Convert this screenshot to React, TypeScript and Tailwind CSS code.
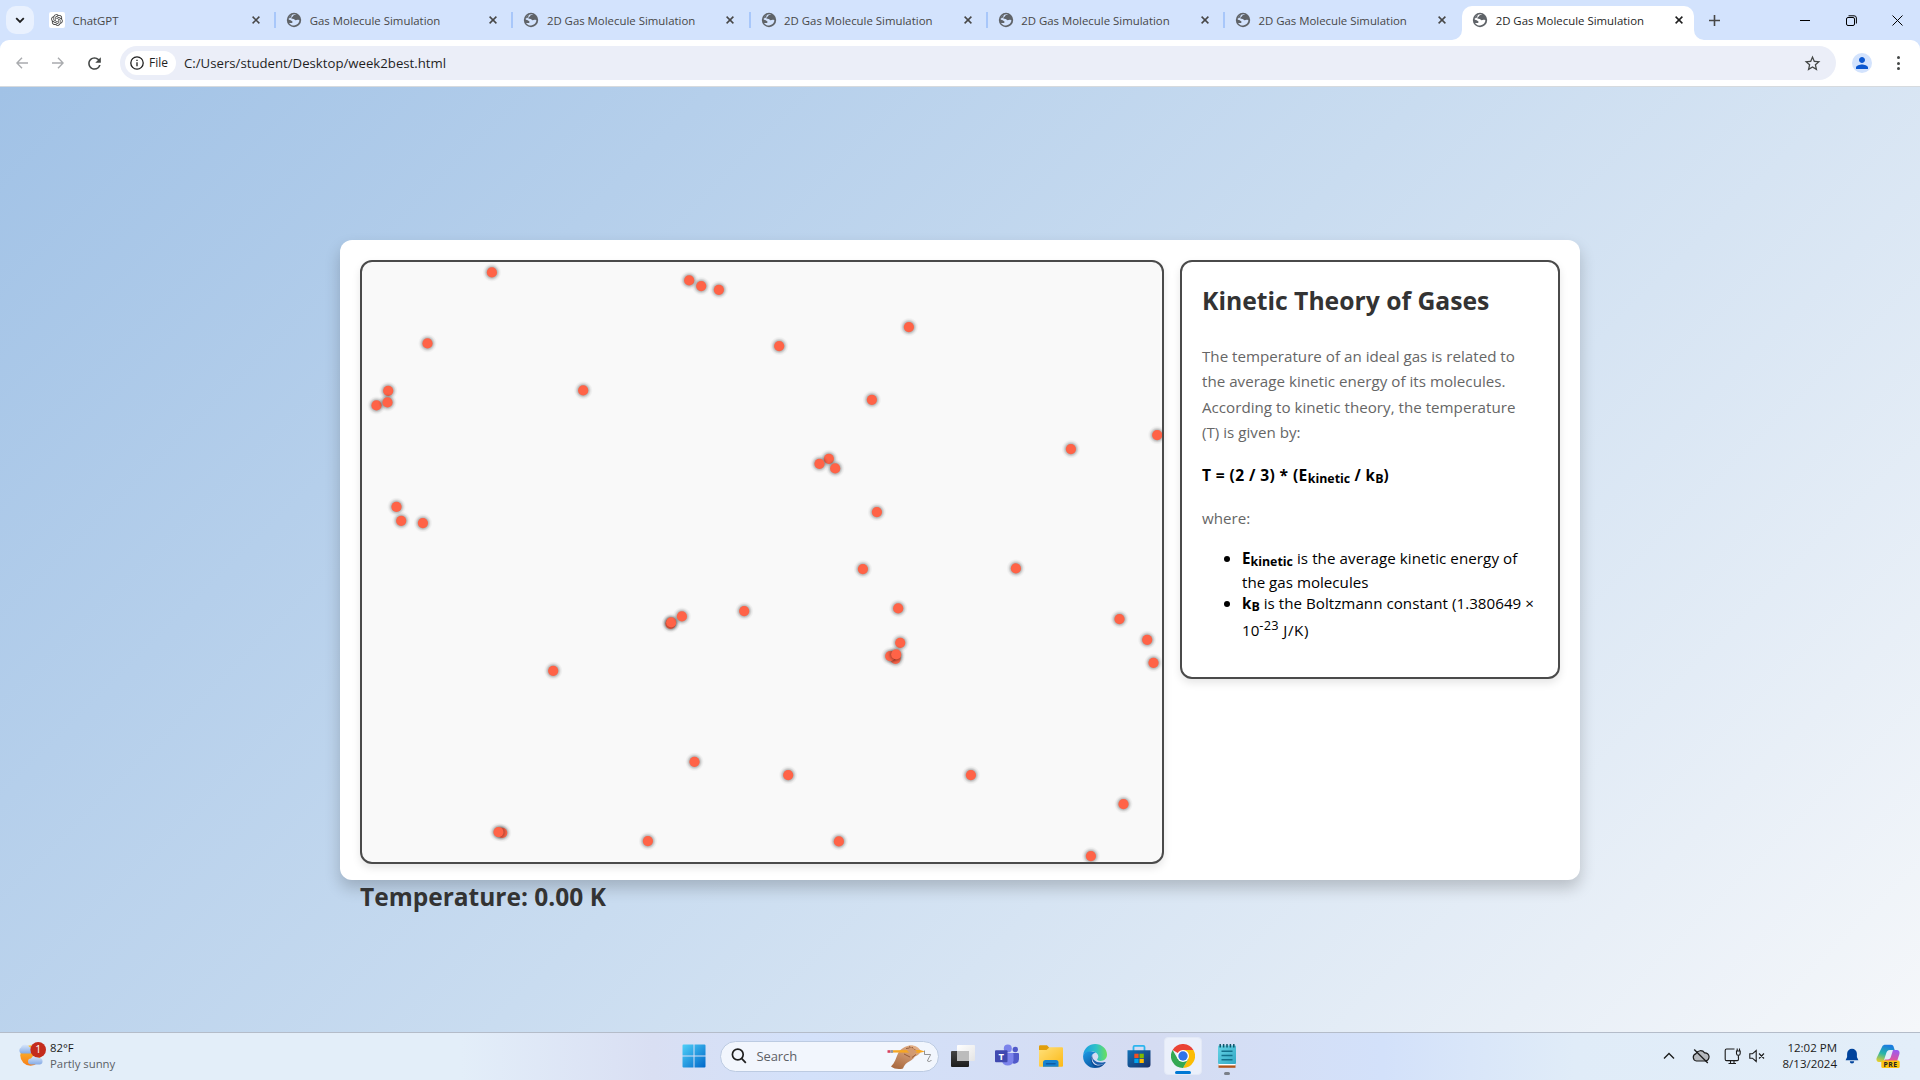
import type { ReactNode } from "react";
import { MdRefresh, MdStarBorder, MdPerson } from "react-icons/md";
import { RiOpenaiFill } from "react-icons/ri";

const tabs = [
  "ChatGPT",
  "Gas Molecule Simulation",
  "2D Gas Molecule Simulation",
  "2D Gas Molecule Simulation",
  "2D Gas Molecule Simulation",
  "2D Gas Molecule Simulation",
  "2D Gas Molecule Simulation",
];

/* Molecule centres inside the 800x600 chamber, in paint order. */
const molecules: [number, number][] = [
  [129.7, 10.3], [327, 18.3], [339, 24], [356.7, 27.7], [65.3, 81.3], [26, 128.7],
  [14.3, 143.3], [25.3, 140.3], [221, 128.3], [34.3, 244.7], [39, 258.7], [60.7, 261],
  [417, 84], [546.7, 65], [509.7, 137.7], [708.7, 187], [795, 173], [466.7, 196.7],
  [457.3, 201.7], [473, 206.3], [514.7, 250], [382, 349], [308.3, 361.7], [309, 360.3],
  [319.7, 354.3], [191, 408.7], [332.3, 499.7], [140, 570.7], [136.3, 570], [285.7, 579],
  [500.7, 307], [653.7, 306.3], [536, 346.3], [538, 380.7], [533.3, 396.7], [528, 394],
  [534, 392.3], [757.3, 357], [785, 377.7], [791.3, 400.7], [426, 513], [608.7, 513],
  [761.3, 542], [476.7, 579.3], [728.7, 594],
];

function CloseIcon({ active = false }: { active?: boolean }) {
  return (
    <svg width="8" height="8" viewBox="0 0 8 8" fill="none" stroke={active ? "#1f1f1f" : "#474747"} strokeWidth="1.5">
      <path d="M0.6 0.6 7.4 7.4M7.4 0.6 0.6 7.4" />
    </svg>
  );
}

function GlobeIcon({ land }: { land: string }) {
  return (
    <svg width="16" height="16" viewBox="0 0 16 16" className="shrink-0">
      <circle cx="8" cy="8" r="7.2" fill="#5f6368" />
      <path
        d="M10.2 2.3C8.9 3.1 7.3 2.9 6.9 4.3 6.7 5.2 5.4 5 5.3 6 5.3 7 6.6 6.8 7.6 6.9 8.8 7 8.6 8.2 9.6 8.2 10.8 8.2 11.4 7.4 13.4 8.3 13.3 9.6 12.8 10.8 11.8 11.8 10.6 12.8 8.6 13.6 6.9 13.6 5.2 13.2 3.8 12.3 2.9 10.8 4.2 11.2 6 11.4 6.5 10.3 7 9.3 5.6 8.9 4.6 8.5 3.8 8.2 3.2 7.6 2.6 7.4 2.8 5.6 3.8 4.1 5.2 3.2 6.8 2.2 8.6 1.9 10.2 2.3Z"
        fill={land}
      />
      <path d="M2.6 7.4C3.6 7.8 4.2 8.4 5.2 8.8L4.2 10.8 2.9 10.8C2.5 9.8 2.4 8.5 2.6 7.4Z" fill="#5f6368" />
      <path d="M2.8 6.6C3.2 4.9 4.4 3.5 6 2.8L5 5.4Z" fill="#5f6368" />
    </svg>
  );
}

function Tab({ title, index }: { title: string; index: number }) {
  const active = index === tabs.length - 1;
  return (
    <div
      className={
        active
          ? "relative mt-[6px] flex h-[34px] w-[232px] items-center rounded-t-[10px] bg-white pl-[10px]"
          : "relative mt-[6px] flex h-[28px] w-[237.2px] items-center pl-[10px]"
      }
    >
      {active && (
        <>
          <svg className="absolute -left-[10px] bottom-0" width="10" height="10"><path d="M10 0V10H0A10 10 0 0 0 10 0Z" fill="#fff" /></svg>
          <svg className="absolute -right-[10px] bottom-0" width="10" height="10"><path d="M0 0V10H10A10 10 0 0 1 0 0Z" fill="#fff" /></svg>
        </>
      )}
      <div className={active ? "-mt-[6px] flex flex-1 items-center" : "flex flex-1 items-center"}>
        {index === 0 ? (
          <span className="grid size-4 place-items-center rounded-[2px] bg-white">
            <RiOpenaiFill size={14} color="#333" />
          </span>
        ) : (
          <GlobeIcon land={active ? "#fff" : "#d3e3fd"} />
        )}
        <span className={active ? "relative top-[0.6px] ml-[7.5px] w-[179.5px] text-[11.4px] text-[#1f1f1f]" : "relative top-[0.6px] ml-[7.5px] w-[179.5px] text-[11.4px] text-[#474747]"}>{title}</span>
        <CloseIcon active={active} />
      </div>
      {index < tabs.length - 2 && <i className="h-4 w-[2px] bg-[#a8c7fa]" />}
    </div>
  );
}

function TabStrip() {
  return (
    <div className="flex h-10 bg-[#d3e3fd]">
      <div className="ml-[6px] mt-[6px] grid h-7 w-7 place-items-center rounded-[10px] bg-[#e9f1fe]">
        <svg width="10" height="7" viewBox="0 0 10 7" fill="none" stroke="#1f1f1f" strokeWidth="1.8"><path d="M1.2 1.2 5 5 8.8 1.2" /></svg>
      </div>
      <div className="ml-[5px] flex">
        {tabs.map((t, i) => <Tab key={i} title={t} index={i} />)}
      </div>
      <div className="ml-[15px] flex h-10 items-center">
        <svg width="11" height="11" viewBox="0 0 11 11" stroke="#474747" strokeWidth="1.6"><path d="M5.5 0V11M0 5.5H11" /></svg>
      </div>
      <div className="ml-auto mr-[17px] flex h-10 items-center gap-[35.5px]">
        <svg width="10" height="10" stroke="#000" fill="none"><path d="M0 5.5H10" /></svg>
        <svg width="11" height="11" stroke="#000" fill="none"><rect x="0.5" y="2.5" width="8" height="8" rx="1.5" /><path d="M2.5 0.8H8A2.3 2.3 0 0 1 10.4 3V8.5" /></svg>
        <svg width="11" height="11" stroke="#000" fill="none"><path d="M0.5 0.5 10.5 10.5M10.5 0.5 0.5 10.5" /></svg>
      </div>
    </div>
  );
}

function Toolbar() {
  return (
    <div className="bg-[#d3e3fd]">
      <div className="flex h-[47px] items-start rounded-t-[9px] border-b border-[#d6dade] bg-white pt-[6px]">
        <div className="ml-[16px] flex h-[34px] w-[104px] items-center">
          <svg width="12" height="12" viewBox="0 0 12 12" fill="none" stroke="#a9abae" strokeWidth="1.4"><path d="M12 6H1M6 0.8 0.9 6 6 11.2" /></svg>
          <svg className="ml-[24px]" width="12" height="12" viewBox="0 0 12 12" fill="none" stroke="#a9abae" strokeWidth="1.4"><path d="M0 6H11M6 0.8 11.1 6 6 11.2" /></svg>
          <MdRefresh size={19} color="#444746" className="ml-[20.5px]" />
        </div>
        <div className="flex h-[34px] w-[1716px] items-center rounded-full bg-[#ebeef8] pl-[5px]">
          <div className="flex h-6 w-[51px] items-center rounded-full bg-white pl-[5px]">
            <svg width="14" height="14" viewBox="0 0 14 14" fill="none" stroke="#1f1f1f" strokeWidth="1.3">
              <circle cx="7" cy="7" r="6.2" /><path d="M7 6.2V10.2M7 3.7V5" />
            </svg>
            <span className="ml-[5px] text-[12px] font-medium leading-none text-[#1f1f1f]">File</span>
          </div>
          <span className="relative top-[0.6px] ml-[8px] text-[13.2px] leading-none text-[#1f1f1f]">C:/Users/student/Desktop/week2best.html</span>
          <MdStarBorder size={19} color="#444746" className="ml-auto mr-[14.5px]" />
        </div>
        <div className="ml-[16px] mt-[7px] grid size-5 place-items-center rounded-full bg-[#d3e3fd]">
          <MdPerson size={18} color="#0b57d0" />
        </div>
        <div className="ml-[24.5px] mt-[10px] flex flex-col gap-[2.5px]">
          <i className="size-[3px] rounded-full bg-[#444746]" />
          <i className="size-[3px] rounded-full bg-[#444746]" />
          <i className="size-[3px] rounded-full bg-[#444746]" />
        </div>
      </div>
    </div>
  );
}

function Sub({ children }: { children: ReactNode }) {
  return <span className="relative top-[2.4px] text-[12.4px] leading-none tracking-normal">{children}</span>;
}

function Chamber() {
  return (
    <div className="h-[604px] w-[804px] overflow-hidden rounded-[12px] border-2 border-[#4a4a4a] bg-[#f9f9f9] shadow-[0_4px_8px_rgba(0,0,0,0.1)]">
      <svg width="800" height="600" viewBox="0 0 800 600">
        <defs>
          <radialGradient id="halo">
            <stop offset="0.45" stopColor="#000" stopOpacity="0.36" />
            <stop offset="0.6" stopColor="#000" stopOpacity="0.22" />
            <stop offset="0.8" stopColor="#000" stopOpacity="0.06" />
            <stop offset="1" stopColor="#000" stopOpacity="0" />
          </radialGradient>
        </defs>
        {molecules.map(([x, y], i) => (
          <g key={i}>
            <circle cx={x + 0.2} cy={y + 0.1} r="9.5" fill="url(#halo)" />
            <circle cx={x + 0.2} cy={y + 0.1} r="5.1" fill="#ff6347" />
          </g>
        ))}
      </svg>
    </div>
  );
}

function InfoPanel() {
  return (
    <div className="h-[419px] w-[380px] rounded-[12px] border-2 border-[#4a4a4a] bg-white px-5 pt-[22.5px] text-[15.15px] text-black shadow-[0_4px_8px_rgba(0,0,0,0.1)]">
      <h2 className="whitespace-nowrap text-[24.7px] font-bold leading-8 text-[#333]">Kinetic Theory of Gases</h2>
      <p className="mt-[27px] whitespace-nowrap leading-[25.5px] tracking-[0.01px] text-[#666]">
        The temperature of an ideal gas is related to<br />
        the average kinetic energy of its molecules.<br />
        According to kinetic theory, the temperature<br />
        (T) is given by:
      </p>
      <div className="mt-[18px] h-[22px] whitespace-nowrap font-bold leading-[22px]">
        <span className="text-[15.6px] tracking-[0.38px]">T = (2 / 3) * (E</span><Sub>kinetic</Sub><span className="tracking-[0.4px]"> / k</span><Sub>B</Sub>)
      </div>
      <p className="mt-5 leading-[25.5px] text-[#666]">where:</p>
      <ul className="mt-4 whitespace-nowrap pl-10 leading-[22px]">
        <li className="relative">
          <i className="absolute -left-[18px] top-[9px] size-[6px] rounded-full bg-black" />
          <span className="block h-[24.4px]"><b>E<Sub>kinetic</Sub></b><span className="tracking-[0.07px]"> is the average kinetic energy of</span></span>
          <span className="block h-[20.6px]">the gas molecules</span>
        </li>
        <li className="relative">
          <i className="absolute -left-[18px] top-[9px] size-[6px] rounded-full bg-black" />
          <span className="block h-[26.7px]"><b>k<Sub>B</Sub></b><span className="tracking-[0.03px]"> is the Boltzmann constant (1.380649 ×</span></span>
          <span className="block h-[22px]">10<span className="relative -top-[6px] text-[12.8px] leading-none tracking-[0.2px]">-23</span><span className="tracking-[0.6px]"> J/K)</span></span>
        </li>
      </ul>
    </div>
  );
}

function Page() {
  return (
    <main className="flex h-[945px] items-center justify-center bg-[linear-gradient(135deg,#a1c2e6,#c9dcf0_50%,#f5f7fa)]">
      <div className="mt-px flex h-[640px] w-[1240px] gap-4 rounded-[12px] bg-white p-5 shadow-[0_8px_16px_rgba(0,0,0,0.2)]">
        <div>
          <Chamber />
          <h2 className="mt-[16.5px] whitespace-nowrap text-[24.5px] font-bold leading-8 text-[#333]">Temperature: 0.00 K</h2>
        </div>
        <InfoPanel />
      </div>
    </main>
  );
}

function WeatherIcon() {
  return (
    <svg width="28" height="28" viewBox="0 0 28 28">
      <defs>
        <linearGradient id="sun" x1="0" y1="0" x2="0" y2="1"><stop offset="0" stopColor="#fdc02f" /><stop offset="1" stopColor="#f77f1a" /></linearGradient>
        <linearGradient id="cloud" x1="0" y1="0" x2="0" y2="1"><stop offset="0" stopColor="#dbe8fb" /><stop offset="1" stopColor="#85abe6" /></linearGradient>
      </defs>
      <circle cx="12.5" cy="13.5" r="10.2" fill="url(#sun)" />
      <path d="M3.5 11.5A3.3 3.3 0 0 1 3 5.5 4.6 4.6 0 0 1 11.5 5 3.4 3.4 0 0 1 12.5 11.5Z" fill="url(#cloud)" />
      <path d="M13 22.5A3 3 0 0 1 13 16.5 4.4 4.4 0 0 1 21 16 3.3 3.3 0 0 1 22 22.5Z" fill="url(#cloud)" />
      <circle cx="20.2" cy="6.3" r="7.8" fill="#c42b1c" transform="translate(0 1.5)" />
    </svg>
  );
}

function WindowsLogo() {
  return (
    <svg width="24" height="24" viewBox="0 0 24 24">
      <defs><linearGradient id="win" x1="0" y1="0" x2="1" y2="1"><stop offset="0" stopColor="#4fd0f8" /><stop offset="1" stopColor="#0067c9" /></linearGradient></defs>
      <path d="M0.5 1.5a1 1 0 0 1 1-1H11.5V11.5H0.5ZM12.5 0.5H22.5a1 1 0 0 1 1 1V11.5H12.5ZM0.5 12.5H11.5V23.5H1.5a1 1 0 0 1-1-1ZM12.5 12.5H23.5V22.5a1 1 0 0 1-1 1H12.5Z" fill="url(#win)" />
    </svg>
  );
}

function HandIcon() {
  return (
    <svg width="48" height="28" viewBox="0 0 48 28">
      <defs><linearGradient id="skin" x1="0.7" y1="0" x2="0.2" y2="1"><stop offset="0" stopColor="#e3b088" /><stop offset="1" stopColor="#a8683f" /></linearGradient></defs>
      <path d="M4 24.5C8 20.5 9 16 11 11.5 13 7 18 4.5 22 3.5 26 2.5 32 5 33.5 8.5 34 11 31 13.5 28 14.5 26 17.5 23.5 19 20.5 20.5 18 22 17 24 16 26.5 12 27.6 7 27 4 24.5Z" fill="url(#skin)" />
      <path d="M19 6.5 26 5.5M22 4.5 29 8.5M17 12 23 15M25 15.5 29 12.5" stroke="#8f5634" strokeWidth="0.9" fill="none" />
      <path d="M4 8.3 33 8 38 9.4 33 10.8 4 10.6Z" fill="#f5a623" />
      <path d="M0.5 8.2H3.5V10.8H0.5Z" fill="#d9415b" /><path d="M3.5 8.2H6V10.8H3.5Z" fill="#8d97a8" />
      <path d="M20 8.5 24 5 30 9.5 25 13.5Z" fill="#d39a70" />
      <path d="M37.5 8.5V12.5H43.5C44 13 41 16.5 40.5 19 41.5 20 43.5 19.5 44.5 18" fill="none" stroke="#777" strokeWidth="0.8" />
    </svg>
  );
}

function TaskViewIcon() {
  return (
    <svg width="24" height="24" viewBox="0 0 24 24">
      <defs>
        <linearGradient id="tvd" x1="0" y1="0" x2="0" y2="1"><stop offset="0" stopColor="#444" /><stop offset="1" stopColor="#1c1c1c" /></linearGradient>
        <linearGradient id="tvl" x1="0" y1="0" x2="1" y2="1"><stop offset="0" stopColor="#fff" /><stop offset="1" stopColor="#e4e4e4" /></linearGradient>
      </defs>
      <rect x="0" y="7" width="18" height="16" rx="1" fill="url(#tvd)" />
      <rect x="6" y="1" width="18" height="16" rx="1" fill="url(#tvl)" />
      <path d="M6 7H18V17H6Z" fill="#bcbcbc" />
    </svg>
  );
}

function TeamsIcon() {
  return (
    <svg width="24" height="24" viewBox="0 0 24 24">
      <circle cx="20.3" cy="5.5" r="2.7" fill="#5059c9" />
      <path d="M15 9H23a1 1 0 0 1 1 1V15A4.6 4.6 0 0 1 17 19Z" fill="#5059c9" />
      <circle cx="12.8" cy="4.6" r="4" fill="#7b83eb" />
      <path d="M7 9H17.5a1 1 0 0 1 1 1V16.5A5.8 5.8 0 0 1 7 16.5Z" fill="#7b83eb" />
      <rect x="0" y="6.3" width="12.5" height="12" rx="1" fill="#4049b0" />
      <text x="6.25" y="15.8" textAnchor="middle" fontFamily="Open Sans, sans-serif" fontWeight="700" fontSize="9.5" fill="#fff">T</text>
    </svg>
  );
}

function ExplorerIcon() {
  return (
    <svg width="24" height="24" viewBox="0 0 24 24">
      <defs><linearGradient id="fold" x1="0" y1="0" x2="1" y2="1"><stop offset="0" stopColor="#ffe07a" /><stop offset="1" stopColor="#fcb916" /></linearGradient></defs>
      <path d="M0 2.5A1.2 1.2 0 0 1 1.2 1.3H8L10.5 4V8H0Z" fill="#e19e0b" />
      <path d="M0 6H7.5L10.5 3.3H23A1 1 0 0 1 24 4.3V21.8A1 1 0 0 1 23 22.8H1A1 1 0 0 1 0 21.8Z" fill="url(#fold)" />
      <path d="M4 22.8V18.5A2.5 2.5 0 0 1 6.5 16H17A2.5 2.5 0 0 1 19.5 18.5V22.8Z" fill="#1683d0" />
      <path d="M7.5 19.8H16" stroke="#0d5ba5" strokeWidth="1.6" strokeLinecap="round" />
    </svg>
  );
}

function EdgeIcon() {
  return (
    <svg width="24" height="24" viewBox="0 0 24 24">
      <defs>
        <linearGradient id="ea" x1="0" y1="0.3" x2="1" y2="0.3"><stop offset="0" stopColor="#1b9de2" /><stop offset="0.55" stopColor="#2fc2c6" /><stop offset="1" stopColor="#6be05a" /></linearGradient>
        <linearGradient id="eb" x1="0" y1="0" x2="0.6" y2="1"><stop offset="0" stopColor="#1c9be6" /><stop offset="1" stopColor="#0c59a4" /></linearGradient>
      </defs>
      <path d="M0.2 11C0.8 4.5 6 0 12.2 0 19 0 24 5 24 10.6 24 14.5 21 17 17.6 17 14.8 17 13.8 15.9 14.2 15.1 15 14.2 15.3 13.4 15.3 12.2 15 9.2 12 7.4 8.8 7.4 4.8 7.4 1.6 8.8 0.2 11Z" fill="url(#ea)" />
      <path d="M0.1 12C0.3 9 4.5 7 8.8 7.4 10.5 7.5 11.8 8 12.8 8.8 9.8 9 8 12 8.2 14.8 8.5 20 13 23.8 16.2 23.2 14.8 23.8 13.3 24 12 24 5 24-0.3 18 0.1 12Z" fill="url(#eb)" />
      <path d="M9.5 11.2C7.5 15 9 20 13.5 21.3 16.5 22 20 21 22.4 18 20.6 21.4 18.8 22.5 16.2 23.4 12 24 7.8 20.5 7.8 15.2 7.8 13.5 8.4 12.1 9.5 11.2Z" fill="#0b4a93" />
      <path d="M9.5 11.2C8 16 11.5 20.8 16 20.8 19 20.8 21 19.6 22 19.2 23 18.8 22.5 18 22 17.9 18 19 13.5 18.6 11 16 9.8 14.6 9.2 12.8 9.5 11.2Z" fill="#1b5fae" />
    </svg>
  );
}

function StoreIcon() {
  return (
    <svg width="24" height="24" viewBox="0 0 24 24">
      <defs><linearGradient id="st" x1="0" y1="0" x2="1" y2="1"><stop offset="0" stopColor="#1172b8" /><stop offset="1" stopColor="#1a2f66" /></linearGradient></defs>
      <path d="M6.5 7V3A1.2 1.2 0 0 1 7.7 1.8H16.3A1.2 1.2 0 0 1 17.5 3V7" fill="none" stroke="#2cb5ee" strokeWidth="1.8" />
      <path d="M0.5 6.3H23.5V20.5A3 3 0 0 1 20.5 23.5H3.5A3 3 0 0 1 0.5 20.5Z" fill="url(#st)" />
      <path d="M7.3 9.7H11.6V14H7.3Z" fill="#f25022" /><path d="M12.5 9.7H16.8V14H12.5Z" fill="#7fba00" />
      <path d="M7.3 14.8H11.6V19H7.3Z" fill="#00a4ef" /><path d="M12.5 14.8H16.8V19H12.5Z" fill="#ffb900" />
    </svg>
  );
}

function ChromeIcon() {
  return (
    <svg width="24" height="24" viewBox="0 0 24 24">
      <path d="M12 12 1.6 6A12 12 0 0 1 22.4 6Z" fill="#ea4335" />
      <path d="M12 6H22.4A12 12 0 0 1 12 24L17.2 15Z" fill="#fbbc04" />
      <path d="M1.6 6A12 12 0 0 0 12 24L17.2 15 12 12 6.8 15Z" fill="#34a853" />
      <circle cx="12" cy="12" r="6" fill="#fff" /><circle cx="12" cy="12" r="4.7" fill="#2f74e8" />
    </svg>
  );
}

function NotepadIcon() {
  return (
    <svg width="20" height="24" viewBox="0 0 20 24">
      <path d="M1.5 20.5H18.5V23.8H1.5Z" fill="#b4561a" /><path d="M1.5 19.5H18.5V21.4H1.5Z" fill="#fff" />
      <defs><linearGradient id="np" x1="0" y1="0" x2="1" y2="1"><stop offset="0" stopColor="#66d4e6" /><stop offset="1" stopColor="#32a8c4" /></linearGradient></defs>
      <rect x="1" y="1.5" width="18" height="18.5" rx="1" fill="url(#np)" />
      <path d="M3.2 0V3.4M6.6 0V3.4M10 0V3.4M13.4 0V3.4M16.8 0V3.4" stroke="#0e5468" strokeWidth="1.5" />
      <path d="M4.5 7.3H15.5M4.5 11.5H15.5M4.5 15.7H15.5" stroke="#12718c" strokeWidth="1.5" />
    </svg>
  );
}

function CopilotIcon() {
  return (
    <svg width="24" height="25" viewBox="0 0 24 25">
      <defs>
        <linearGradient id="ca" x1="0.5" y1="0" x2="0.2" y2="1"><stop offset="0" stopColor="#1a7be0" /><stop offset="0.5" stopColor="#27b5a8" /><stop offset="1" stopColor="#e8d02c" /></linearGradient>
        <linearGradient id="cb" x1="0.6" y1="0" x2="0.4" y2="1"><stop offset="0" stopColor="#9b5cf0" /><stop offset="0.6" stopColor="#e0559b" /><stop offset="1" stopColor="#f58a4b" /></linearGradient>
      </defs>
      <path d="M6 3C6.8 1.2 8 0.8 9.5 0.8H15C17 0.8 17.4 2 18 4L18.7 6H14C11.5 6 10.8 7.5 10.3 9L8.2 15.5C7.7 17.2 6.8 18 5 18H3C0.8 18 0 16.2 0.6 14Z" fill="url(#ca)" />
      <path d="M18.7 6H20.8C23 6 24 8 23.4 10L20.5 19C19.8 21 18.5 22 16.5 22H9.5C7.5 22 7 20.5 6.5 18 8 17.5 8.5 16.5 8.8 15.5H11.5C13.5 15.5 14.3 14.5 14.8 13L17 6Z" fill="url(#cb)" />
      <rect x="5.3" y="16.6" width="18.4" height="7.4" rx="1.5" fill="#fdc30f" />
      <text x="14.5" y="22.9" textAnchor="middle" fontFamily="Open Sans, sans-serif" fontWeight="700" fontSize="6.8" fill="#222" letterSpacing="0.4">PRE</text>
    </svg>
  );
}

function Slot({ children }: { children: ReactNode }) {
  return <div className="grid w-[44px] place-items-center">{children}</div>;
}

function Taskbar() {
  return (
    <footer className="flex h-12 items-center border-t border-[#b4bcc9] bg-[linear-gradient(90deg,#e3eef9_0%,#e3eef9_24%,#d9dff3_34%,#d3e1fa_42%,#d5dcf2_60%,#d3e1fa_72%,#e0ecf8_82%,#e3eef9_100%)] pb-px">
      <div className="relative ml-[18px] w-[28px]">
        <WeatherIcon />
        <span className="absolute left-[17.2px] top-px text-[10.5px] leading-[13px] text-white">1</span>
      </div>
      <div className="ml-[4px] w-[622px] text-[11.35px] leading-4 text-[#1a1a1a]">
        <div>82°F</div>
        <div className="text-[#5a5f66]">Partly sunny</div>
      </div>
      <Slot><WindowsLogo /></Slot>
      <div className="ml-[3.5px] mr-[2.5px] flex h-[31px] w-[219px] items-center rounded-full border border-[#bccbe2] bg-[#f2f6fd] pl-[10px]">
        <svg width="16" height="16" viewBox="0 0 16 16" fill="none" stroke="#1f1f1f" strokeWidth="1.7"><circle cx="6.8" cy="6.5" r="5.4" /><path d="M10.8 10.6 14.8 14.8" /></svg>
        <span className="ml-[10px] text-[13px] leading-none tracking-[-0.1px] text-[#5d6166]">Search</span>
        <div className="ml-auto mr-[3px]"><HandIcon /></div>
      </div>
      <Slot><TaskViewIcon /></Slot>
      <Slot><TeamsIcon /></Slot>
      <Slot><ExplorerIcon /></Slot>
      <Slot><EdgeIcon /></Slot>
      <Slot><StoreIcon /></Slot>
      <Slot>
        <div className="relative grid h-[38px] w-[38px] place-items-center rounded-[4px] border border-[#e3e9f6] bg-[#ebf0fb]">
          <ChromeIcon />
          <i className="absolute bottom-0 h-[3px] w-4 rounded-full bg-[#0078d4]" />
        </div>
      </Slot>
      <Slot>
        <div className="relative grid h-[38px] place-items-center">
          <NotepadIcon />
          <i className="absolute bottom-0 h-[3px] w-[6px] rounded-full bg-[#7b8089]" />
        </div>
      </Slot>
      <div className="ml-auto flex items-center">
        <svg width="12" height="8" viewBox="0 0 12 8" fill="none" stroke="#1a1a1a" strokeWidth="1.3"><path d="M1 6.5 6 1.5 11 6.5" /></svg>
        <svg className="ml-[17px]" width="18" height="16" viewBox="0 0 18 16">
          <path d="M4.5 13A3.8 3.8 0 0 1 4 5.6 5 5 0 0 1 12.6 4.8 4.1 4.1 0 0 1 13.3 13Z" fill="#b5b8bd" stroke="#1a1a1a" strokeWidth="1.2" />
          <path d="M2.2 1.5 15.8 15" stroke="#1a1a1a" strokeWidth="1.3" />
        </svg>
        <svg className="ml-[14px]" width="18" height="18" viewBox="0 0 18 18" fill="none" stroke="#1a1a1a" strokeWidth="1.1">
          <path d="M10.5 2H2.6A1.4 1.4 0 0 0 1.2 3.4V12.2A1.4 1.4 0 0 0 2.6 13.6H13.2A1.4 1.4 0 0 0 14.5 12.2V10.5M6.5 13.6V16.4M10 13.6V16.4M4.5 16.5H12" />
          <path d="M12.5 4V6.5A1.8 1.8 0 0 0 16.2 6.5V4ZM13.2 4V1.5M15.5 4V1.5M14.4 8.3V11" />
        </svg>
        <svg className="ml-[7px]" width="17" height="14" viewBox="0 0 17 14" fill="none" stroke="#1a1a1a" strokeWidth="1.1">
          <path d="M0.8 4.8H3.4L7.2 1.5V12.5L3.4 9.2H0.8ZM10 4.5 15 9.5M15 4.5 10 9.5" />
        </svg>
        <div className="ml-[5px] w-[66px] text-right text-[11.5px] leading-4 text-[#1a1a1a]">
          <div>12:02 PM</div>
          <div>8/13/2024</div>
        </div>
        <svg className="ml-[8px]" width="14" height="16" viewBox="0 0 14 16" fill="#00439c">
          <path d="M7 0.8A4.9 4.9 0 0 1 11.9 5.7V9L13.4 12.3H0.6L2.1 9V5.7A4.9 4.9 0 0 1 7 0.8ZM4.8 13.2H9.2A2.2 2.2 0 0 1 4.8 13.2Z" />
        </svg>
        <div className="ml-[17px] mr-[20px] mt-px"><CopilotIcon /></div>
      </div>
    </footer>
  );
}

export default function App() {
  return (
    <div className="h-[1080px] w-[1920px] overflow-hidden font-['Open_Sans','Noto_Sans',sans-serif]">
      <TabStrip />
      <Toolbar />
      <Page />
      <Taskbar />
    </div>
  );
}
